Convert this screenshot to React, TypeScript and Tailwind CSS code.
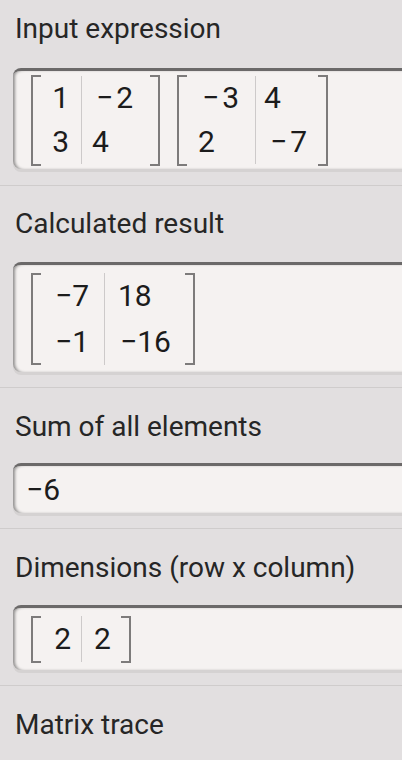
import React from "react";

const font = { fontFamily: "Roboto, 'Noto Sans', sans-serif" };

function LBracket({ h }: { h: number }) {
  return (
    <div
      className="w-[10px] shrink-0 border-y-2 border-l-2 border-[#7d7b7b]"
      style={{ height: h }}
    />
  );
}
function RBracket({ h }: { h: number }) {
  return (
    <div
      className="w-[10px] shrink-0 border-y-2 border-r-2 border-[#7d7b7b]"
      style={{ height: h }}
    />
  );
}

type Cell = { t: string; pl?: number; pr?: number; right?: boolean };

function Matrix({
  cols,
  widths,
  rowH,
  bracketH,
}: {
  cols: Cell[][];
  widths: number[];
  rowH: number;
  bracketH: number;
}) {
  return (
    <div className="flex items-center">
      <LBracket h={bracketH} />
      {cols.map((col, ci) => (
        <div
          key={ci}
          className={
            ci > 0
              ? "flex flex-col border-l border-[#cdcaca]"
              : "flex flex-col"
          }
          style={{ width: widths[ci] }}
        >
          {col.map((c, ri) => (
            <div
              key={ri}
              className={c.right ? "text-right whitespace-pre" : "text-left whitespace-pre"}
              style={{
                height: rowH,
                lineHeight: rowH + "px",
                paddingLeft: c.pl ?? 0,
                paddingRight: c.pr ?? 0,
              }}
            >
              {c.t}
            </div>
          ))}
        </div>
      ))}
      <RBracket h={bracketH} />
    </div>
  );
}

function Box({
  h,
  children,
  pl = 18,
}: {
  h: number;
  children: React.ReactNode;
  pl?: number;
}) {
  return (
    <div
      className="ml-[13px] w-[420px] flex items-center rounded-l-[8px] border-t-[3px] border-t-[#6b6969] bg-[#f5f2f1] shadow-[inset_3px_0_3px_-1px_rgba(0,0,0,0.4),0_3px_0_#d5d2d2] text-[30px] text-[#1c1c1c]"
      style={{ height: h, paddingLeft: pl }}
    >
      {children}
    </div>
  );
}

function Label({ children }: { children: React.ReactNode }) {
  return (
    <div className="pl-[15px] text-[28px] leading-[32px] text-[#262626]">
      {children}
    </div>
  );
}

const M = "\u2212";
const H = "\u200A";

export default function App() {
  return (
    <div
      className="w-[402px] h-[760px] overflow-hidden bg-[#e2dfe0]"
      style={font}
    >
      {/* Section 1 */}
      <div className="pt-[13px] pb-[16px] border-b border-[#cfcccc]">
        <Label>Input expression</Label>
        <div className="mt-[23px]">
          <Box h={101} pl={18}>
            <Matrix
              bracketH={91}
              rowH={44}
              widths={[40, 69]}
              cols={[
                [
                  { t: "1", right: true, pr: 12 },
                  { t: "3", right: true, pr: 12 },
                ],
                [
                  { t: M + H + "2", pl: 14 },
                  { t: "4", pl: 10 },
                ],
              ]}
            />
            <div className="w-[17px]" />
            <Matrix
              bracketH={91}
              rowH={44}
              widths={[68, 63]}
              cols={[
                [
                  { t: M + H + "3", pl: 15 },
                  { t: "2", pl: 11 },
                ],
                [
                  { t: "4", pl: 8 },
                  { t: M + H + "7", pl: 14 },
                ],
              ]}
            />
          </Box>
        </div>
      </div>

      {/* Section 2 */}
      <div className="pt-[22px] pb-[15px] border-b border-[#cfcccc]">
        <Label>Calculated result</Label>
        <div className="mt-[22px]">
          <Box h={110} pl={18}>
            <Matrix
              bracketH={92}
              rowH={46}
              widths={[63, 81]}
              cols={[
                [
                  { t: M + "7", right: true, pr: 15 },
                  { t: M + "1", right: true, pr: 15 },
                ],
                [
                  { t: "18", pl: 13 },
                  { t: M + "16", pl: 15 },
                ],
              ]}
            />
          </Box>
        </div>
      </div>

      {/* Section 3 */}
      <div className="pt-[23px] pb-[15px] border-b border-[#cfcccc]">
        <Label>Sum of all elements</Label>
        <div className="mt-[20px]">
          <Box h={50} pl={13}>
            <span className="leading-[46px]">{M + "6"}</span>
          </Box>
        </div>
      </div>

      {/* Section 4 */}
      <div className="pt-[23px] pb-[15px] border-b border-[#cfcccc]">
        <Label>Dimensions (row x column)</Label>
        <div className="mt-[21px]">
          <Box h={65} pl={18}>
            <Matrix
              bracketH={47}
              rowH={46}
              widths={[40, 40]}
              cols={[[{ t: "2", right: true, pr: 10 }], [{ t: "2", pl: 12 }]]}
            />
          </Box>
        </div>
      </div>

      {/* Section 5 */}
      <div className="pt-[23px]">
        <Label>Matrix trace</Label>
      </div>
    </div>
  );
}
